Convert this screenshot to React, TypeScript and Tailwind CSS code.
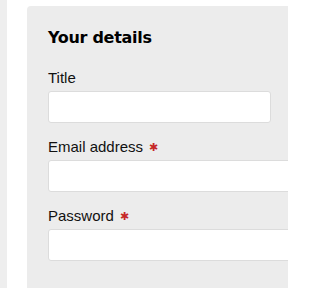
import React from "react";

const Field = ({ label, required, short }: { label: string; required?: boolean; short?: boolean }) => (
  <div className="mb-[14px]">
    <label className="block text-[15px] leading-[20px] text-[#111] mb-[3px]">
      {label}
      {required && <span className="ml-[6px] text-[11px] text-[#c62828] align-[1px]">✱</span>}
    </label>
    <input
      type="text"
      className={`block h-[32px] bg-white border border-[#dcdcdc] rounded-[3px] ${short ? "w-[223px]" : "w-[300px]"}`}
    />
  </div>
);

const App = () => {
  return (
    <div className="flex w-[288px] h-[288px] overflow-hidden bg-white" style={{ fontFamily: '"Liberation Sans", Arial, sans-serif' }}>
      <div className="w-[7px] shrink-0 bg-[#eeeeee]" />
      <div className="w-[20px] shrink-0 bg-white" />
      <div className="mt-[6px] flex-1 min-w-[300px] rounded-tl-[4px] bg-[#ececec] pl-[21px] pt-[22px]">
        <h2
          className="text-[16px] leading-[20px] font-bold text-black mb-[20px] tracking-[-0.3px]"
          style={{ fontFamily: '"DejaVu Sans", Verdana, sans-serif' }}
        >
          Your details
        </h2>
        <Field label="Title" short />
        <Field label="Email address" required />
        <Field label="Password" required />
      </div>
    </div>
  );
};

export default App;
